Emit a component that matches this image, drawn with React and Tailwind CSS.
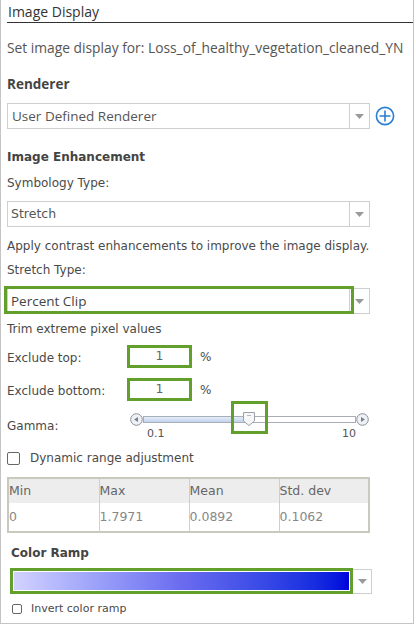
import React from 'react';

const segoe = { fontFamily: '"Open Sans", "Noto Sans", sans-serif' };
const tahoma = { fontFamily: '"DejaVu Sans", Verdana, sans-serif' };

const Arrow = () => (
    <svg width="9" height="5" viewBox="0 0 9 5">
        <path d="M0 0 L9 0 L4.5 5 Z" fill="#9a9a9a" />
    </svg>
);

const Select = ({ children, className = '', font = tahoma }) => (
    <div className={`flex h-[26px] w-[363px] border border-[#cfcfcf] bg-white ${className}`}>
        <div className="flex-1 flex items-center pl-[3px] text-[12.5px] text-[#555]" style={font}>
            {children}
        </div>
        <div className="w-[20px] flex items-center justify-center border-l border-[#cfcfcf]">
            <Arrow />
        </div>
    </div>
);

const RoundBtn = ({ dir }) => (
    <svg width="13" height="13" viewBox="0 0 13 13">
        <circle cx="6.5" cy="6.5" r="5.8" fill="#eef1f6" stroke="#8a8f99" strokeWidth="1" />
        {dir === 'left' ? (
            <path d="M4 6.5 L8 4 L8 9 Z" fill="#7b808a" />
        ) : (
            <path d="M9 6.5 L5 4 L5 9 Z" fill="#7b808a" />
        )}
    </svg>
);

const Check = ({ size = 'w-[12px] h-[12px]' }) => (
    <div className={`${size} border border-[#666] rounded-[2px] bg-white`} />
);

export default function App() {
    return (
        <div className="w-[414px] h-[624px] border-l border-r border-b border-[#c4c4c4] bg-white text-[#4a4a4a]">
            <div className="ml-[6px] h-[23px] border-b border-[#333] pl-[1px] text-[14px] leading-[23px] text-[#333]" style={segoe}>
                Image Display
            </div>

            <div className="pl-[6px]">
                <div className="mt-[15px] h-[20px] leading-[20px] text-[13.8px] text-[#555] whitespace-nowrap" style={segoe}>
                    Set image display for: Loss_of_healthy_vegetation_cleaned_YN
                </div>

                <div className="mt-[16px] h-[20px] leading-[20px] text-[13.5px] font-bold text-[#444]" style={segoe}>
                    Renderer
                </div>

                <div className="mt-[9px] flex items-center">
                    <Select font={segoe}>
                        <span className="text-[13.5px] pl-[1px]">User Defined Renderer</span>
                    </Select>
                    <svg className="ml-[5px]" width="20" height="20" viewBox="0 0 20 20">
                        <circle cx="10" cy="10" r="8.6" fill="none" stroke="#2a7fd0" strokeWidth="1.6" />
                        <path d="M10 4.5 V15.5 M4.5 10 H15.5" stroke="#2a7fd0" strokeWidth="1.6" />
                    </svg>
                </div>

                <div className="mt-[18px] h-[20px] leading-[20px] text-[12px] font-bold text-[#444]" style={tahoma}>
                    Image Enhancement
                </div>
                <div className="mt-[6px] h-[20px] leading-[20px] text-[12px]" style={tahoma}>
                    Symbology Type:
                </div>
                <Select className="mt-[8px] h-[25px]">Stretch</Select>

                <div className="mt-[9px] h-[20px] leading-[20px] text-[12px] whitespace-nowrap" style={tahoma}>
                    Apply contrast enhancements to improve the image display.
                </div>
                <div className="mt-[4px] h-[20px] leading-[20px] text-[12px]" style={tahoma}>
                    Stretch Type:
                </div>

                <div className="relative mt-[6px] h-[28px] pt-[2px]">
                    <Select className="h-[24px]" font={segoe}>
                        <span className="text-[13.5px] text-[#444]">Percent Clip</span>
                    </Select>
                    <div className="absolute left-[-3px] top-0 w-[350px] h-[28px] border-[3px] border-[#62a02b]" />
                </div>

                <div className="mt-[5px] h-[20px] leading-[20px] text-[12px]" style={tahoma}>
                    Trim extreme pixel values
                </div>

                <div className="mt-[6px] flex items-center h-[23px]" style={tahoma}>
                    <div className="w-[120px] text-[12px] pt-[2px]">Exclude top:</div>
                    <div className="w-[65px] h-[23px] border-[3px] border-[#62a02b] flex items-center justify-center text-[12.5px] text-[#666]">1</div>
                    <div className="ml-[8px] text-[12px]">%</div>
                </div>
                <div className="mt-[10px] flex items-center h-[23px]" style={tahoma}>
                    <div className="w-[120px] text-[12px] pt-[2px]">Exclude bottom:</div>
                    <div className="w-[65px] h-[23px] border-[3px] border-[#62a02b] flex items-center justify-center text-[12.5px] text-[#666]">1</div>
                    <div className="ml-[8px] text-[12px]">%</div>
                </div>

                <div className="mt-[3px] flex h-[38px]" style={tahoma}>
                    <div className="w-[123px] pt-[13px] text-[12px]">Gamma:</div>
                    <div className="relative w-[240px] h-[38px]">
                        <div className="absolute left-[0px] top-[9px]"><RoundBtn dir="left" /></div>
                        <div className="absolute left-[13px] top-[12px] w-[213px] h-[7px] border border-[#a9aeb6] bg-white">
                            <div className="h-full w-[105px] bg-gradient-to-b from-[#e4ecf8] to-[#c3d3ee]" />
                        </div>
                        <div className="absolute left-[226px] top-[9px]"><RoundBtn dir="right" /></div>
                        <svg className="absolute left-[111px] top-[7px]" width="16" height="16" viewBox="0 0 16 16">
                            <path d="M2.5 1.5 H13.5 V10 L8 14.5 L2.5 10 Z" fill="#f7f7f7" stroke="#9a9fa8" strokeWidth="1" />
                            <path d="M6 4.5 H10" stroke="#b5b9c0" strokeWidth="1" />
                        </svg>
                        <div className="absolute left-[101px] top-[-3px] w-[37px] h-[33px] border-[3px] border-[#62a02b]" />
                        <div className="absolute left-[17px] top-[22px] text-[11px] text-[#555]">0.1</div>
                        <div className="absolute left-[212px] top-[22px] text-[11px] text-[#555]">10</div>
                    </div>
                </div>

                <div className="mt-[7px] flex items-center h-[18px]" style={tahoma}>
                    <Check size="w-[13px] h-[13px]" />
                    <span className="ml-[10px] text-[12px]">Dynamic range adjustment</span>
                </div>

                <table className="mt-[10px] w-[363px] border-2 border-[#c9c9bd] border-collapse text-[12.5px]" style={tahoma}>
                    <thead>
                        <tr className="bg-[#ededed] h-[25px] text-[#666]">
                            <td className="w-[91px] border-r border-[#cfcfc4] text-left font-normal">Min</td>
                            <td className="w-[90px] border-r border-[#cfcfc4] text-left font-normal">Max</td>
                            <td className="w-[90px] border-r border-[#cfcfc4] text-left font-normal">Mean</td>
                            <td className="text-left font-normal">Std. dev</td>
                        </tr>
                    </thead>
                    <tbody>
                        <tr className="h-[29px] text-[#888]">
                            <td className="border-r border-[#cfcfc4]">0</td>
                            <td className="border-r border-[#cfcfc4]">1.7971</td>
                            <td className="border-r border-[#cfcfc4]">0.0892</td>
                            <td>0.1062</td>
                        </tr>
                    </tbody>
                </table>

                <div className="mt-[10px] ml-[4px] h-[20px] leading-[20px] text-[12px] font-bold text-[#444]" style={tahoma}>
                    Color Ramp
                </div>

                <div className="mt-[5px] ml-[3px] flex items-center">
                    <div className="w-[343px] h-[26px] border-[3px] border-[#62a02b] p-[1px] bg-white">
                        <div className="w-full h-full bg-gradient-to-r from-[#d2d2ff] via-[#6b6bef] to-[#0000dc]" />
                    </div>
                    <div className="w-[19px] h-[25px] border border-l-0 border-[#cfcfcf] flex items-center justify-center">
                        <Arrow />
                    </div>
                </div>

                <div className="mt-[7px] ml-[5px] flex items-center h-[16px]" style={tahoma}>
                    <Check size="w-[10px] h-[10px]" />
                    <span className="ml-[9px] text-[11px]">Invert color ramp</span>
                </div>
            </div>
        </div>
    );
}
